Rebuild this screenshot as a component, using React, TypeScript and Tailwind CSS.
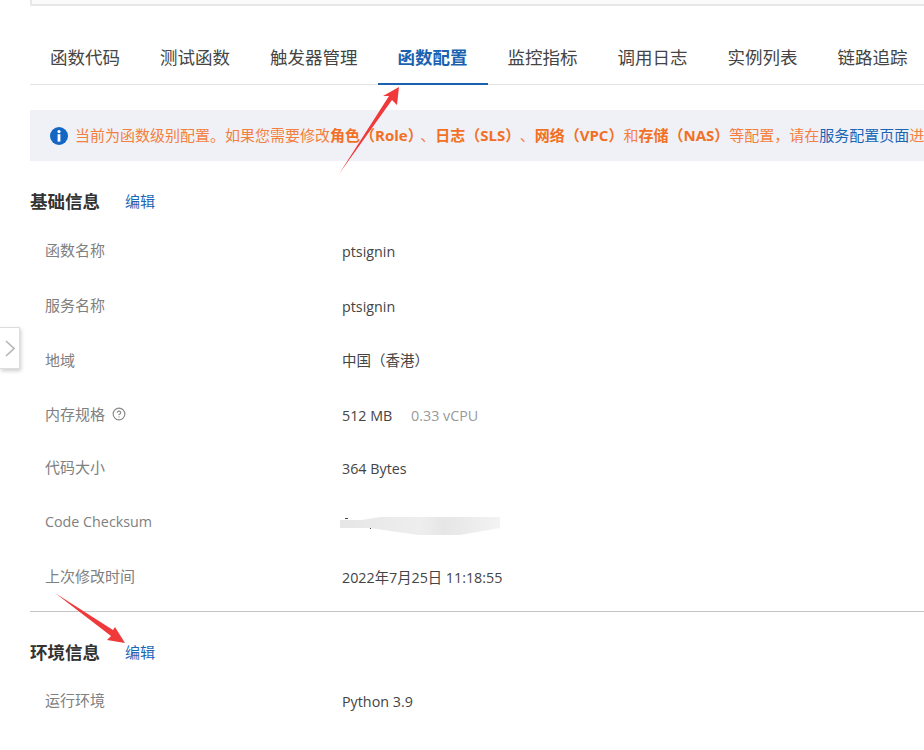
import { CircleHelp } from "lucide-react";

const tabs = ["函数代码", "测试函数", "触发器管理", "函数配置", "监控指标", "调用日志", "实例列表", "链路追踪"];

function Row({ label, className, children }: { label: React.ReactNode; className: string; children?: React.ReactNode }) {
  return (
    <div className={`flex items-center pl-[15px] ${className}`}>
      <div className="w-[297px] shrink-0 pb-[3px] text-[15px] text-[#808080] flex items-center gap-[7px]">{label}</div>
      <div className="text-[14.3px] text-[#444] whitespace-nowrap">{children}</div>
    </div>
  );
}

function Title({ text }: { text: string }) {
  return (
    <div className="flex items-center">
      <h2 className="text-[17.5px] font-bold text-[#333] w-[95px]">{text}</h2>
      <a href="#" className="text-[15px] text-[#1a66b5]">编辑</a>
    </div>
  );
}

export default function App() {
  return (
    <div className="relative h-[750px] w-[924px] overflow-hidden bg-white font-['Open_Sans','Noto_Sans_CJK_SC',sans-serif]">
      <div className="pl-[30px]">
        <div className="h-[6px] border-b-2 border-l-2 border-[#e8e8e8] bg-[#fafafa]" />

        <div className="mt-[38px] flex h-[41px] border-b border-[#e3e3e3] text-[17.5px] text-[#444] whitespace-nowrap">
          {tabs.map(t => (
            <div
              key={t}
              className={t === "函数配置" ? "h-[41px] border-b-2 border-[#1a62b0] px-5 font-bold text-[#1a62b0]" : "px-5"}
            >
              {t}
            </div>
          ))}
        </div>

        <div className="mt-[25px] flex h-[51px] items-center gap-[7px] bg-[#eff1f6] pl-5 text-[15px] text-[#f47f3e] whitespace-nowrap">
          <svg width="18" height="18" viewBox="0 0 18 18" className="shrink-0">
            <circle cx="9" cy="9" r="9" fill="#1366c4" />
            <circle cx="9" cy="4.6" r="1.6" fill="#fff" />
            <rect x="7.6" y="7.2" width="2.8" height="7.4" fill="#fff" />
          </svg>
          <p>
            当前为函数级别配置。如果您需要修改<b className="mr-[5px] text-[#f27024]">角色（Role）</b>、<b className="mr-[7px] text-[#f27024]">日志（SLS）</b>、<b className="text-[#f27024]">网络（VPC）</b>和<b className="text-[#f27024]">存储（NAS）</b>等配置，请在<a href="#" className="text-[#1a66b5]">服务配置页面</a>进行操作
          </p>
        </div>

        <div className="mt-[27px]">
          <Title text="基础信息" />
        </div>
        <div className="mt-[10px]">
          <Row label="函数名称" className="h-[55px]">ptsignin</Row>
          <Row label="服务名称" className="h-[55px]">ptsignin</Row>
          <Row label="地域" className="h-[54px]"><span className="text-[14.5px]">中国（香港）</span></Row>
          <Row label={<>内存规格 <CircleHelp size={14} className="text-[#888]" /></>} className="h-[54px]">
            512 MB <span className="ml-[15px] text-[#999]">0.33 vCPU</span>
          </Row>
          <Row label="代码大小" className="h-[53px]">364 Bytes</Row>
          <Row label={<span className="text-[14.3px]">Code Checksum</span>} className="h-[55px]" />
          <Row label="上次修改时间" className="h-[55px]">2022年7月25日 11:18:55</Row>
        </div>
        <div className="mt-[6px] border-t border-[#c4c4c4]" />

        <div className="mt-[27px]">
          <Title text="环境信息" />
        </div>
        <div className="mt-[9px]">
          <Row label="运行环境" className="h-[55px]">Python 3.9</Row>
          <Row label="函数入口" className="h-[61px]" />
        </div>
      </div>

      {/* 收起按钮 */}
      <div className="absolute left-0 top-[327px] flex h-[42px] w-[20px] items-center justify-center border border-l-0 border-[#ddd] bg-white shadow-[1px_2px_4px_rgba(0,0,0,0.2)]">
        <svg width="10" height="17" viewBox="0 0 10 17" fill="none">
          <polyline points="1,1 9,8.5 1,16" stroke="#b5b5b5" strokeWidth="1.6" />
        </svg>
      </div>

      {/* 打码 */}
      <svg className="absolute left-[340px] top-[515px]" width="162" height="22" viewBox="0 0 162 22">
        <defs>
          <linearGradient id="smudge" x1="0" x2="1" y1="0" y2="0">
            <stop offset="0" stopColor="#e6e6e6" />
            <stop offset="0.5" stopColor="#eeeeee" />
            <stop offset="0.65" stopColor="#e6e6e6" />
            <stop offset="1" stopColor="#f3f3f3" />
          </linearGradient>
        </defs>
        <path d="M0 5 H22 L40 2 H160 V13 L120 20 H78 L30 13 H0 Z" fill="url(#smudge)" />
        <rect x="5" y="3" width="3" height="1" fill="#444" />
        <rect x="30" y="13" width="1" height="1" fill="#444" />
      </svg>

      {/* 红色箭头 */}
      <svg className="absolute left-0 top-0 pointer-events-none" width="924" height="750" viewBox="0 0 924 750">
        <path d="M339 174 L389 96 L383 96 L399 87 L397 105 L392 100 Z" fill="#f0393a" />
        <path d="M55 593 L113 630 L115 627 L125 643 L107 640 L111 636 Z" fill="#f0393a" />
      </svg>
    </div>
  );
}
